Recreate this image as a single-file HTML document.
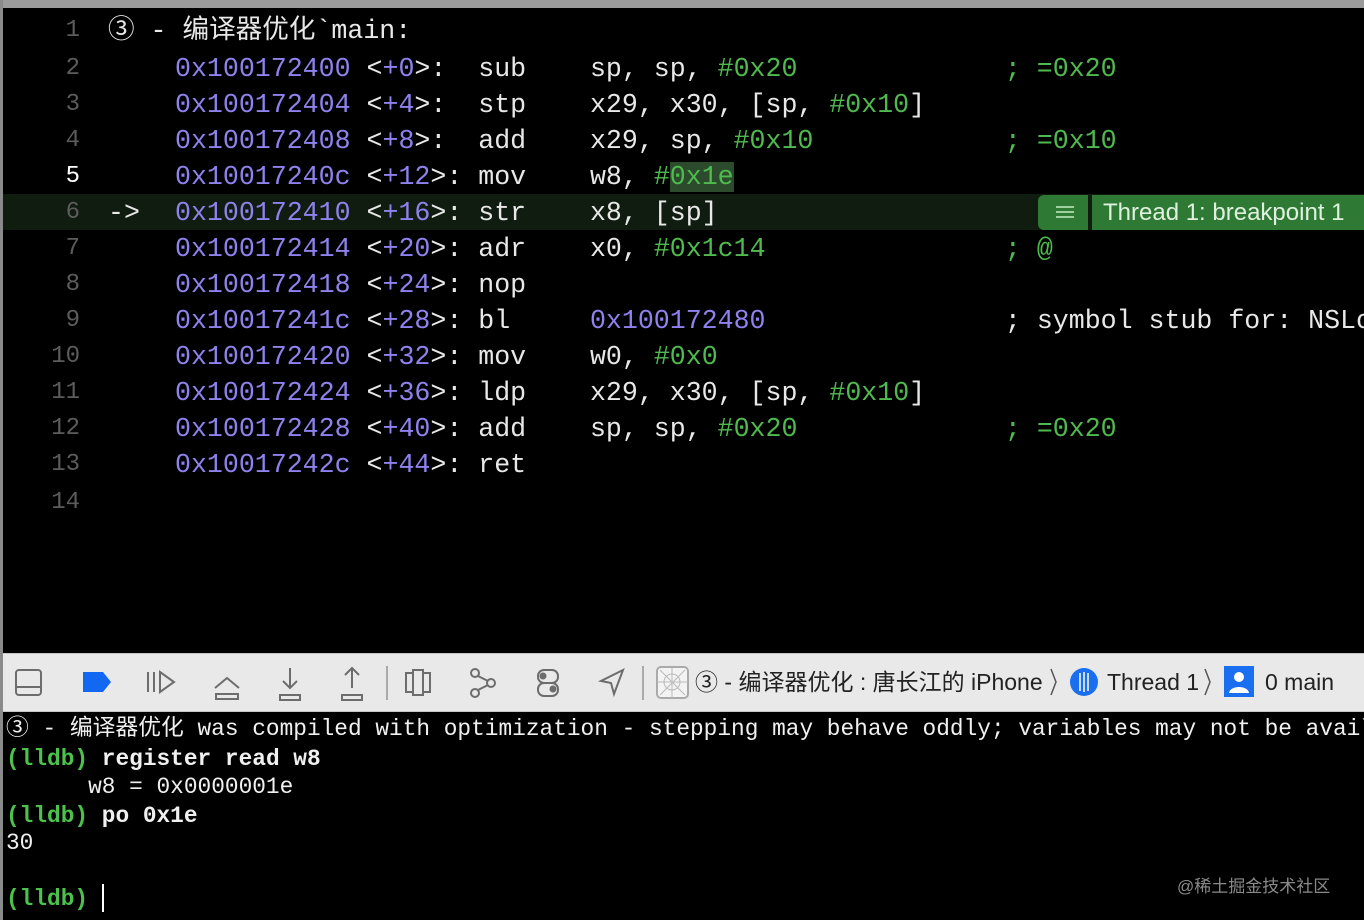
<!DOCTYPE html>
<html><head><meta charset="utf-8"><style>
*{margin:0;padding:0;box-sizing:border-box}
html,body{overflow:hidden}
body{width:1364px;height:920px;background:#000;position:relative;overflow:hidden;font-family:"Liberation Mono","Noto Sans CJK SC",monospace}
.top{position:absolute;left:0;top:0;width:1364px;height:8px;background:#9b9b9b}
.lb{position:absolute;left:0;top:0;width:3px;height:920px;background:#8a8a8a}
.ln{position:absolute;left:0;width:1364px;height:36px;overflow:hidden;font-size:26.6px;line-height:36px;white-space:pre;color:#e8e8e8}
.n{position:absolute;width:80px;text-align:right;left:0;color:#5c5c5c;font-size:24px}
.c{position:absolute;left:175px}
.a{color:#8f82ee}.g{color:#4fbb4f}
.hl{position:absolute;left:3px;top:194px;width:1361px;height:36px;background:#0f1c0f}
.tb{position:absolute;left:3px;top:653px;width:1361px;height:59px;background:#e9e9e9;border-top:1px solid #c8c8c8;border-bottom:1px solid #c8c8c8}
.con{position:absolute;left:6px;width:1358px;overflow:hidden;font-size:22.8px;white-space:pre;color:#f0f0f0;line-height:28px}
.p{color:#4cc24c;font-weight:bold}
.b{font-weight:bold}
.ui{font-family:"Liberation Sans","Noto Sans CJK SC",sans-serif}
</style></head><body>
<div class="top"></div>
<div class="hl"></div>
<div class="ln" style="top:13px"><span class="n">1</span><span style="position:absolute;left:108px">③ - 编译器优化`main:</span></div>
<div class="ln" style="top:51px"><span class="n">2</span><span class="c"><span class="a">0x100172400</span> &lt;<span class="a">+0</span>&gt;:  sub    sp, sp, <span class="g">#0x20</span>             <span class="g">; =0x20</span></span></div>
<div class="ln" style="top:87px"><span class="n">3</span><span class="c"><span class="a">0x100172404</span> &lt;<span class="a">+4</span>&gt;:  stp    x29, x30, [sp, <span class="g">#0x10</span>]</span></div>
<div class="ln" style="top:123px"><span class="n">4</span><span class="c"><span class="a">0x100172408</span> &lt;<span class="a">+8</span>&gt;:  add    x29, sp, <span class="g">#0x10</span>            <span class="g">; =0x10</span></span></div>
<div class="ln" style="top:159px"><span class="n" style="color:#fff">5</span><span class="c"><span class="a">0x10017240c</span> &lt;<span class="a">+12</span>&gt;: mov    w8, <span class="g">#<span style="background:#2c4a2c">0x1e</span></span></span></div>
<div class="ln" style="top:195px"><span class="n">6</span><span style="position:absolute;left:108px">-&gt;</span><span class="c"><span class="a">0x100172410</span> &lt;<span class="a">+16</span>&gt;: str    x8, [sp]</span></div>
<div class="ln" style="top:231px"><span class="n">7</span><span class="c"><span class="a">0x100172414</span> &lt;<span class="a">+20</span>&gt;: adr    x0, <span class="g">#0x1c14</span>               <span class="g">; @</span></span></div>
<div class="ln" style="top:267px"><span class="n">8</span><span class="c"><span class="a">0x100172418</span> &lt;<span class="a">+24</span>&gt;: nop</span></div>
<div class="ln" style="top:303px"><span class="n">9</span><span class="c"><span class="a">0x10017241c</span> &lt;<span class="a">+28</span>&gt;: bl     <span class="a">0x100172480</span>               ; symbol stub for: NSLog</span></div>
<div class="ln" style="top:339px"><span class="n">10</span><span class="c"><span class="a">0x100172420</span> &lt;<span class="a">+32</span>&gt;: mov    w0, <span class="g">#0x0</span></span></div>
<div class="ln" style="top:375px"><span class="n">11</span><span class="c"><span class="a">0x100172424</span> &lt;<span class="a">+36</span>&gt;: ldp    x29, x30, [sp, <span class="g">#0x10</span>]</span></div>
<div class="ln" style="top:411px"><span class="n">12</span><span class="c"><span class="a">0x100172428</span> &lt;<span class="a">+40</span>&gt;: add    sp, sp, <span class="g">#0x20</span>             <span class="g">; =0x20</span></span></div>
<div class="ln" style="top:447px"><span class="n">13</span><span class="c"><span class="a">0x10017242c</span> &lt;<span class="a">+44</span>&gt;: ret</span></div>
<div class="ln" style="top:485px"><span class="n">14</span></div>

<div style="position:absolute;left:1038px;top:195px;width:50px;height:35px;background:#2e7a34;border-radius:6px 0 0 6px"></div>
<div style="position:absolute;left:1056px;top:206px;width:18px;height:2px;background:#9fd09f;box-shadow:0 5px 0 #9fd09f,0 10px 0 #9fd09f"></div>
<div class="ui" style="position:absolute;left:1092px;top:195px;width:272px;height:35px;overflow:hidden;background:#2e7a34;color:#dff0df;font-size:24px;line-height:35px;padding-left:11px;white-space:nowrap">Thread 1: breakpoint 1</div>

<div class="tb">
<svg width="1361" height="57" style="position:absolute;left:0;top:0" fill="none" stroke="#6d6d6d" stroke-width="2">
<rect x="13" y="16" width="25" height="25" rx="3"/><line x1="13" y1="33" x2="38" y2="33"/>
<path d="M80 18h20l8 10-8 10h-20z" fill="#1268f0" stroke="none"/>
<path d="M145 18v20M151 18v20M157 18l14 10-14 10z"/>
<path d="M212 34l12-10 12 10M213 40h22v5h-22z"/>
<path d="M287 14v20M280 27l7 7 7-7M277 41h20v5h-20z"/>
<path d="M349 34v-20M342 21l7-7 7 7M339 41h20v5h-20z"/>
<line x1="384" y1="12" x2="384" y2="46" stroke="#aaa"/>
<path d="M403 19h7v19h-7zM410 16h10v25h-10zM420 19h7v19h-7z"/>
<circle cx="472" cy="19" r="4"/><circle cx="472" cy="39" r="4"/><circle cx="488" cy="29" r="4"/><path d="M475 22l10 5M475 36l10-5"/>
<rect x="535" y="16" width="20" height="13" rx="6"/><rect x="535" y="29" width="20" height="13" rx="6"/><circle cx="540" cy="22" r="2.5" fill="#6d6d6d"/><circle cx="550" cy="35" r="2.5" fill="#6d6d6d"/>
<path d="M620 16l-22 11 10 2 3 11z"/>
<line x1="640" y1="12" x2="640" y2="46" stroke="#aaa"/>
<rect x="654" y="13" width="31" height="31" rx="4" stroke="#aaa" fill="#f3f3f3"/>
<path d="M657 16l25 25M682 16l-25 25M669 13v31M654 28h31" stroke="#bbb" stroke-width="1"/><circle cx="669" cy="28" r="8" stroke="#bbb" stroke-width="1"/>
<path d="M1048 15l5 13-5 13M1202 15l5 13-5 13" stroke="#555" stroke-width="1.5"/>
<circle cx="1081" cy="28" r="14" fill="#1a6ef0" stroke="none"/><path d="M1077 19v18M1081 18v20M1085 19v18" stroke="#fff" stroke-width="1.5"/>
<rect x="1221" y="12" width="30" height="31" fill="#1a6ef0" stroke="none"/><circle cx="1236" cy="23" r="5" fill="#fff" stroke="none"/><path d="M1226 39c1-8 19-8 20 0z" fill="#fff" stroke="none"/>
</svg>
<div class="ui" style="position:absolute;left:692px;top:0;line-height:57px;font-size:23px;color:#222;white-space:nowrap">③ - 编译器优化 : 唐长江的 iPhone</div>
<div class="ui" style="position:absolute;left:1104px;top:0;line-height:57px;font-size:23px;color:#222">Thread 1</div>
<div class="ui" style="position:absolute;left:1262px;top:0;line-height:57px;font-size:23px;color:#222">0 main</div>
</div>

<div class="con" style="top:715px">③ - 编译器优化 was compiled with optimization - stepping may behave oddly; variables may not be available.</div>
<div class="con" style="top:745px"><span class="p">(lldb)</span> <span class="b">register read w8</span></div>
<div class="con" style="top:773px">      w8 = 0x0000001e</div>
<div class="con" style="top:802px"><span class="p">(lldb)</span> <span class="b">po 0x1e</span></div>
<div class="con" style="top:829px">30</div>
<div class="con" style="top:885px"><span class="p">(lldb)</span> </div>
<div style="position:absolute;left:102px;top:884px;width:2px;height:28px;background:#fff"></div>
<div class="ui" style="position:absolute;left:1177px;top:872px;font-size:17px;color:#8a8a8a">@稀土掘金技术社区</div>
<div class="lb"></div>
</body></html>
